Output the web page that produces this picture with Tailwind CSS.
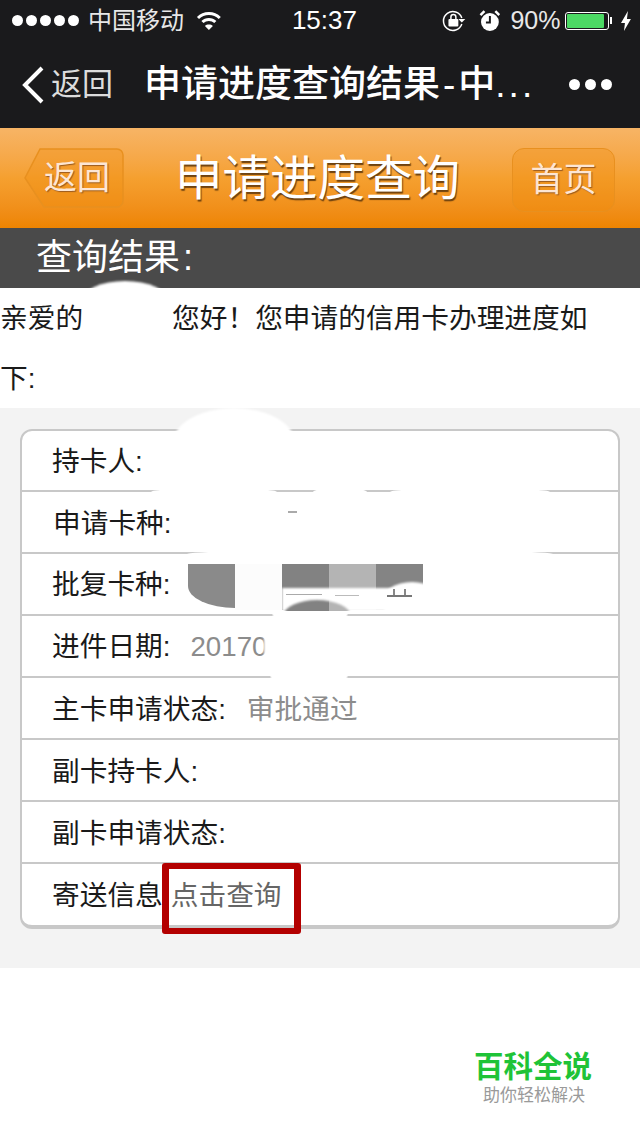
<!DOCTYPE html>
<html lang="zh-CN">
<head>
  <meta charset="UTF-8">
  <meta name="viewport" content="width=device-width, initial-scale=1.0">
  <title>申请进度查询</title>
  <script src="https://cdn.jsdelivr.net/npm/@tailwindcss/browser@4"></script>
</head>
<body class="bg-white">
  <div class="relative w-[640px] h-[1136px] overflow-hidden bg-white font-['Liberation_Sans','Noto_Sans_CJK_SC',sans-serif]">

    <!-- Status bar -->
    <div class="h-[40px] bg-[#1a1a1c] text-white flex items-center pl-[12px] pr-[8px] pt-[1px] text-[24px]">
      <div class="flex gap-[3px]">
        <span class="w-[11px] h-[11px] rounded-full bg-white"></span>
        <span class="w-[11px] h-[11px] rounded-full bg-white"></span>
        <span class="w-[11px] h-[11px] rounded-full bg-white"></span>
        <span class="w-[11px] h-[11px] rounded-full bg-white"></span>
        <span class="w-[11px] h-[11px] rounded-full bg-white"></span>
      </div>
      <span class="ml-[9px] w-[99px] text-[#e8e8e8]">中国移动</span>
      <svg class="ml-[10px]" width="26" height="20" viewBox="0 0 26 20" fill="none" stroke="white" stroke-width="3">
        <path d="M2 7c6-6 16-6 22 0"/><path d="M6.500 11c3.500-3.500 9.500-3.500 13 0"/><path d="M13 19l-4-4c2-2 6-2 8 0z" fill="white" stroke="none"/>
      </svg>
      <span class="ml-[70px] w-[64px] text-[26px] font-medium">15:37</span>
      <svg class="ml-[86px]" width="24" height="24" viewBox="0 0 24 24" fill="none" stroke="white" stroke-width="1.500">
        <path d="M20 15a9.500 9.500 0 1 1 0-6"/><path d="M23.500 10l-3.500 3.500-3.500-3.500z" fill="white" stroke="none"/>
        <rect x="6.500" y="10" width="10" height="7.500" rx="1" fill="white" stroke="none"/><path d="M9 10V8a2.500 2.500 0 0 1 5 0v2"/>
      </svg>
      <svg class="ml-[13px]" width="22" height="24" viewBox="0 0 22 24" fill="none">
        <circle cx="11" cy="13" r="9" fill="white"/><path d="M11 7v6.500H7" stroke="#1a1a1c" stroke-width="2"/>
        <path d="M1.500 6l4-4M20.500 6l-4-4" stroke="white" stroke-width="2.500"/>
      </svg>
      <span class="ml-[10px] w-[50px] text-[25px] text-[#e8e8e8]">90%</span>
      <div class="ml-[5px] w-[44px] h-[18px] rounded-[3px] border border-white p-[1px]">
        <div class="w-[37px] h-full bg-[#4cd964] rounded-[1px]"></div>
      </div>
      <span class="ml-[1px] w-[2px] h-[7px] bg-white"></span>
      <svg class="ml-[8px]" width="12" height="22" viewBox="0 0 12 22"><path d="M8 1L1 13h4l-1 8 7-12H7z" fill="white"/></svg>
    </div>

    <!-- WeChat nav bar -->
    <div class="h-[88px] bg-[#1a1a1c] text-white flex items-center pl-[21px] pr-[28px] pt-[2px]">
      <svg width="24" height="38" viewBox="0 0 24 38" fill="none" stroke="white" stroke-width="4"><path d="M21 2L4 19l17 17"/></svg>
      <span class="ml-[6px] w-[66px] text-[31px] text-[#dcdcdc]">返回</span>
      <span class="ml-[27px] w-[400px] text-[37px] font-medium whitespace-nowrap">申请进度查询结果<span class="mx-[3px]">-</span>中<span class="tracking-[3px]">...</span></span>
      <div class="ml-auto mb-[2px] flex gap-[5px]">
        <span class="w-[11px] h-[11px] rounded-full bg-white"></span>
        <span class="w-[11px] h-[11px] rounded-full bg-white"></span>
        <span class="w-[11px] h-[11px] rounded-full bg-white"></span>
      </div>
    </div>

    <!-- Orange page header -->
    <div class="h-[100px] bg-gradient-to-b from-[#f7b465] via-[#f5a02f] to-[#ee8400] flex items-start pt-[20px] pl-[24px] pr-[25px]">
      <div class="relative w-[100px] h-[60px]">
        <svg class="absolute left-0 top-0" width="100" height="60" viewBox="0 0 100 60">
          <path d="M16 1H93a6 6 0 0 1 6 6V53a6 6 0 0 1-6 6H20L1 30z" fill="#ee8a0a" fill-opacity=".3" stroke="#e8901f" stroke-width="1.500"/>
        </svg>
        <span class="relative block pl-[20px] text-[33px] leading-[60px] text-[#fde6d4] [text-shadow:1px_1px_1px_#9a5a20]">返回</span>
      </div>
      <span class="ml-[51px] mt-[1px] text-[47.5px] leading-[60px] text-white [text-shadow:1px_2px_1px_#6e4210]">申请进度查询</span>
      <span class="ml-auto w-[103px] h-[64px] pb-[1px] flex items-center justify-center rounded-[12px] bg-[#ee8a0a]/30 border border-[#e8901f] text-[33px] text-[#fde6d4] [text-shadow:1px_1px_1px_#9a5a20]">首页</span>
    </div>

    <!-- Section title -->
    <div class="h-[60px] bg-[#4a4a4a] pl-[36px] text-[36px] leading-[60px] text-white">查询结果<span class="ml-[3px]">:</span></div>

    <!-- Greeting -->
    <div class="h-[120px] pt-[1px] text-[27.7px] leading-[60px] text-[#1a1a1a]">
      <p class="whitespace-nowrap">亲爱的<span class="inline-block w-[89px]"></span>您好！您申请的信用卡办理进度如</p>
      <p>下:</p>
    </div>

    <!-- Result card -->
    <div class="h-[560px] bg-[#f3f3f3] pt-[21px] px-[20px]">
      <div class="bg-white border-2 border-[#c8c8c8] border-b-4 rounded-[12px] divide-y-2 divide-[#c8c8c8] text-[27.7px] text-[#1a1a1a]">
        <div class="h-[61px] flex items-center pl-[30px] pt-[2px]">持卡人:</div>
        <div class="h-[62px] flex items-center pl-[31px] pt-[3px]">申请卡种:</div>
        <div class="h-[62px] flex items-center pl-[30px] pt-[2px]">
          <span>批复卡种:</span>
          <div class="ml-[18px] flex items-start h-[46px] mt-[4px]">
            <span class="w-[47px] h-[44px] bg-[#8a8a8a] rounded-bl-[47px_22px]"></span>
            <span class="w-[47px] h-[46px] bg-[#fcfcfc]"></span>
            <span class="w-[47px] h-[46px] bg-[#828282]"></span>
            <span class="w-[47px] h-[46px] bg-[#b4b4b4]"></span>
            <span class="w-[47px] h-[46px] bg-[#848484]"></span>
          </div>
        </div>
        <div class="h-[62px] flex items-center pl-[30px] pt-[2px]">进件日期:<span class="ml-[20px] text-[#8c8c8c]">20170</span></div>
        <div class="h-[62px] flex items-center pl-[30px] pt-[3px]">主卡申请状态:<span class="ml-[21px] text-[#8c8c8c]">审批通过</span></div>
        <div class="h-[62px] flex items-center pl-[30px] pt-[3px]">副卡持卡人:</div>
        <div class="h-[62px] flex items-center pl-[30px] pt-[3px]">副卡申请状态:</div>
        <div class="h-[61px] flex items-center pl-[30px] pt-[3px]">寄送信息<span class="ml-[8px] text-[#666666]">点击查询</span></div>
      </div>
    </div>

    <!-- Watermark -->
    <div class="mt-[82px] pr-[48px] flex flex-col items-end">
      <span class="text-[29.5px] leading-[34px] font-bold text-[#1ec337]">百科全说</span>
      <span class="mr-[7px] text-[17px] leading-[24px] text-[#9a9a9a]">助你轻松解决</span>
    </div>

    <!-- Red highlight around the link, sits over the card -->
    <div class="absolute left-[162px] top-[863px] w-[139px] h-[71px] border-y-[6px] border-x-[7px] border-[#b30000] rounded-[3px]"></div>

    <!-- White smears that hide personal details -->
    <div class="absolute left-[82px] top-[281px] w-[86px] h-[40px] rounded-[50%] bg-white blur-[1px]"></div>
    <div class="absolute left-[83px] top-[298px] w-[87px] h-[50px] bg-white blur-[1px]"></div>
    <div class="absolute left-[173px] top-[408px] w-[122px] h-[70px] rounded-[50%] bg-white blur-[1px]"></div>
    <div class="absolute left-[151px] top-[488px] w-[126px] h-[8px] rounded-[50%] bg-white"></div>
    <div class="absolute left-[313px] top-[488px] w-[54px] h-[8px] rounded-[50%] bg-white"></div>
    <div class="absolute left-[390px] top-[488px] w-[160px] h-[8px] rounded-[50%] bg-white"></div>
    <div class="absolute left-[288px] top-[511px] w-[9px] h-[2px] bg-[#aaaaaa]"></div>
    <div class="absolute left-[187px] top-[550px] w-[366px] h-[8px] rounded-[50%] bg-white"></div>
    <div class="absolute left-[272px] top-[612px] w-[76px] h-[6px] rounded-[50%] bg-white"></div>
    <div class="absolute left-[270px] top-[674px] w-[78px] h-[6px] rounded-[50%] bg-white"></div>
    <div class="absolute left-[264px] top-[628px] w-[50px] h-[40px] bg-white blur-[1px]"></div>

    <!-- Smear across the bottom of the mosaic -->
    <div class="absolute left-[282px] top-[564px] w-[170px] h-[47px] overflow-hidden">
      <div class="absolute left-0 top-[24px] w-[141px] h-[23px] bg-white blur-[1px]"></div>
      <div class="absolute left-[141px] top-[20px] w-[30px] h-[30px] bg-white"></div>
      <div class="absolute left-0 top-0 w-[47px] h-[47px] overflow-hidden">
        <div class="absolute left-[2px] top-[36px] w-[66px] h-[30px] rounded-[50%] bg-[#828282] blur-[1px]"></div>
      </div>
      <div class="absolute left-[47px] top-0 w-[47px] h-[47px] overflow-hidden">
        <div class="absolute left-[-45px] top-[36px] w-[66px] h-[30px] rounded-[50%] bg-[#b4b4b4] blur-[1px]"></div>
      </div>
      <div class="absolute left-[100px] top-[18px] w-[60px] h-[40px] rounded-[50%] bg-white blur-[1px]"></div>
      <div class="absolute left-[105px] top-[31px] w-[25px] h-[2px] bg-[#777777]"></div>
      <div class="absolute left-[111px] top-[25px] w-[2px] h-[6px] bg-[#888888]"></div>
      <div class="absolute left-[122px] top-[25px] w-[2px] h-[6px] bg-[#888888]"></div>
      <div class="absolute left-[4px] top-[30px] w-[36px] h-[1px] bg-[#aaaaaa]"></div>
      <div class="absolute left-[53px] top-[31px] w-[24px] h-[1px] bg-[#bbbbbb]"></div>
    </div>
  </div>
</body>
</html>
